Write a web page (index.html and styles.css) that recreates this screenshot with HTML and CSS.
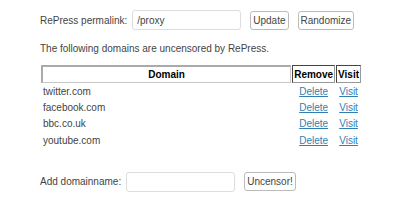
FILE: index.html
```html
<!DOCTYPE html>
<html lang="en">
<head>
    <meta charset="UTF-8">
    <title>RePress</title>
    <link rel="stylesheet" href="styles.css">
</head>
<body>
    <div class="wrap">
        <!-- permalink row -->
        <div class="row">
            <label>RePress permalink:</label>
            <input type="text" class="field" value="/proxy">
            <button type="button" class="btn">Update</button>
            <button type="button" class="btn">Randomize</button>
        </div>

        <p class="intro">The following domains are uncensored by RePress.</p>

        <table class="domains">
            <tr>
                <th class="th-domain">Domain</th>
                <th class="th-small">Remove</th>
                <th class="th-small">Visit</th>
            </tr>
            <tr><td>twitter.com</td><td class="c"><a href="#">Delete</a></td><td class="c"><a href="#">Visit</a></td></tr>
            <tr><td>facebook.com</td><td class="c"><a href="#">Delete</a></td><td class="c"><a href="#">Visit</a></td></tr>
            <tr><td>bbc.co.uk</td><td class="c"><a href="#">Delete</a></td><td class="c"><a href="#">Visit</a></td></tr>
            <tr><td>youtube.com</td><td class="c"><a href="#">Delete</a></td><td class="c"><a href="#">Visit</a></td></tr>
        </table>

        <!-- add domain row -->
        <div class="row add-row">
            <label>Add domainname:</label>
            <input type="text" class="field" value="">
            <button type="button" class="btn">Uncensor!</button>
        </div>
    </div>
</body>
</html>
```

FILE: styles.css
```css
body{
    margin: 0;
    background-color: #fff;
    font-family: "Liberation Sans", Arial, sans-serif;
    font-size: 10px;
    color: #444;
}
.wrap{
    padding: 10px 0 0 40px;
    width: 322px;
}
.row{
    display: flex;
    align-items: center;
    height: 20px;
}
.row label{
    white-space: nowrap;
    margin-right: 5px;
}
.field{
    box-sizing: border-box;
    width: 109px;
    height: 20px;
    border: 1px solid #ddd;
    border-radius: 3px;
    padding: 0 4px;
    font-family: "Liberation Sans", Arial, sans-serif;
    font-size: 10px;
    color: #444;
    margin-right: 9px;
}
.btn{
    box-sizing: border-box;
    height: 19px;
    padding: 0 2px;
    margin-right: 9px;
    background: #fff;
    border: 1px solid #bbb;
    border-radius: 3px;
    font-family: "Liberation Sans", Arial, sans-serif;
    font-size: 10px;
    color: #444;
}
.intro{
    margin: 12px 0 10px 0;
    line-height: 13px;
}
.domains{
    width: 322px;
    border-collapse: separate;
    border-spacing: 1px 0;
}
.domains th{
    height: 15px;
    padding: 0 1px;
    font-weight: bold;
    color: #000;
    font-size: 10px;
}
.th-domain{
    border: 1px solid #c8c8c8;
    border-left-width: 2px;
    border-top-width: 2px;
    border-left-color: #aaa;
    border-top-color: #aaa;
}
.th-small{
    width: 1px;
    white-space: nowrap;
    border: 1px solid #444;
    border-right-color: #999;
    border-bottom-color: #999;
}
.domains td{
    height: 16.4px;
    padding: 0 2px;
    line-height: 13px;
}
.domains td.c{
    text-align: center;
}
.domains a{
    color: #2f7fb5;
}
.add-row{
    margin-top: 23px;
}
```
